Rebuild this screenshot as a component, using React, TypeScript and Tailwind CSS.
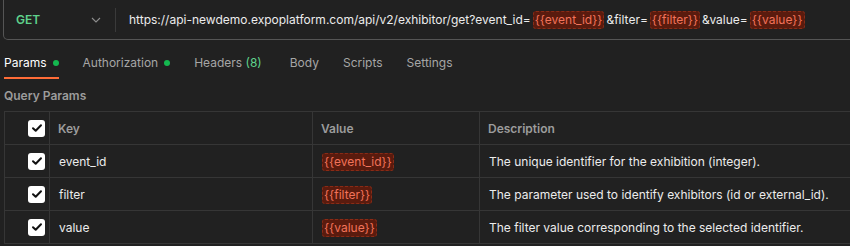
import React from "react";

const params = [
    { key: "event_id", value: "{{event_id}}", description: "The unique identifier for the exhibition (integer)." },
    { key: "filter", value: "{{filter}}", description: "The parameter used to identify exhibitors (id or external_id)." },
    { key: "value", value: "{{value}}", description: "The filter value corresponding to the selected identifier." },
];

const tabs = [
    { label: "Params", dot: true, active: true },
    { label: "Authorization", dot: true },
    { label: "Headers", count: "(8)" },
    { label: "Body" },
    { label: "Scripts" },
    { label: "Settings" },
];

const Variable = ({ name }: { name: string }) => (
    <span className="inline-flex items-center h-[18px] px-[1px] rounded-[3px] border border-dashed border-[#8a2b16] bg-[#5a1b0e] text-[#f2735a]">
        {name}
    </span>
);

const Checkbox = () => (
    <span className="flex items-center justify-center w-[17px] h-[17px] rounded-[3px] bg-white">
        <svg width="12" height="12" viewBox="0 0 12 12" fill="none">
            <path d="M2 6.2L4.7 8.8L10 3.3" stroke="#111" strokeWidth="2" strokeLinecap="round" strokeLinejoin="round" />
        </svg>
    </span>
);

const App: React.FC = () => {
    return (
        <div className="w-[850px] h-[246px] overflow-hidden bg-[#212121] font-['Inter',sans-serif] text-[12px]">
            {/* Request line */}
            <div className="ml-[3px] w-[900px] h-[40px] pt-[1px] flex items-center border border-t-0 border-[#555555] rounded-b-[5px]">
                <div className="w-[111px] flex items-center justify-between pl-[12px] pr-[14px]">
                    <span className="font-semibold text-[#5fd28c]">GET</span>
                    <svg width="10" height="6" viewBox="0 0 10 6" fill="none">
                        <path d="M1 1L5 5L9 1" stroke="#8d8d8d" strokeWidth="1.1" />
                    </svg>
                </div>
                <div className="w-px h-[24px] bg-[#3a3a3a]" />
                <div className="ml-[13px] flex items-center gap-[2px] text-[#ececec] whitespace-nowrap">
                    <span>https://api-newdemo.expoplatform.com/api/v2/exhibitor/get?event_id=</span>
                    <Variable name="{{event_id}}" />
                    <span>&amp;filter=</span>
                    <Variable name="{{filter}}" />
                    <span>&amp;value=</span>
                    <Variable name="{{value}}" />
                </div>
            </div>

            {/* Tabs */}
            <div className="flex h-[39px] pl-[4px] gap-[24px]">
                {tabs.map((tab) => (
                    <div
                        key={tab.label}
                        className={`flex items-center pt-[9px] gap-[6px] border-b-2 ${
                            tab.active ? "border-[#ff6c37] text-white" : "border-transparent text-[#a6a6a6]"
                        } ${tab.count ? "mr-[4px]" : ""}`}
                    >
                        <span>
                            {tab.label}
                            {tab.count && <span className="text-[#5fd28c]"> {tab.count}</span>}
                        </span>
                        {tab.dot && <span className="w-[6px] h-[6px] rounded-full bg-[#14b84f]" />}
                    </div>
                ))}
            </div>

            {/* Query params */}
            <div className="h-[32px] pl-[4px] pt-[10px] font-semibold text-[#9c9c9c] leading-[14px]">
                Query Params
            </div>

            <div className="ml-[4px] w-[900px] border-t border-l border-[#363636]">
                <div className="grid grid-cols-[45px_263px_167px_1fr] h-[33px] border-b border-[#363636]">
                    <div className="flex items-center justify-end pr-[4px] border-r border-[#363636]">
                        <Checkbox />
                    </div>
                    <div className="flex items-center pt-[2px] px-[8px] border-r border-[#363636] font-semibold text-[#9c9c9c]">Key</div>
                    <div className="flex items-center pt-[2px] px-[8px] border-r border-[#363636] font-semibold text-[#9c9c9c]">Value</div>
                    <div className="flex items-center pt-[2px] px-[8px] font-semibold text-[#9c9c9c]">Description</div>
                </div>
                {params.map((p) => (
                    <div key={p.key} className="grid grid-cols-[45px_263px_167px_1fr] h-[33px] border-b border-[#363636]">
                        <div className="flex items-center justify-end pr-[4px] border-r border-[#363636]">
                            <Checkbox />
                        </div>
                        <div className="flex items-center pt-[2px] px-[9px] border-r border-[#363636] text-[#ececec]">{p.key}</div>
                        <div className="flex items-center pt-[1px] px-[9px] border-r border-[#363636]">
                            <Variable name={p.value} />
                        </div>
                        <div className="flex items-center pt-[2px] px-[9px] text-[#ececec]">{p.description}</div>
                    </div>
                ))}
            </div>
        </div>
    );
};

export default App;
